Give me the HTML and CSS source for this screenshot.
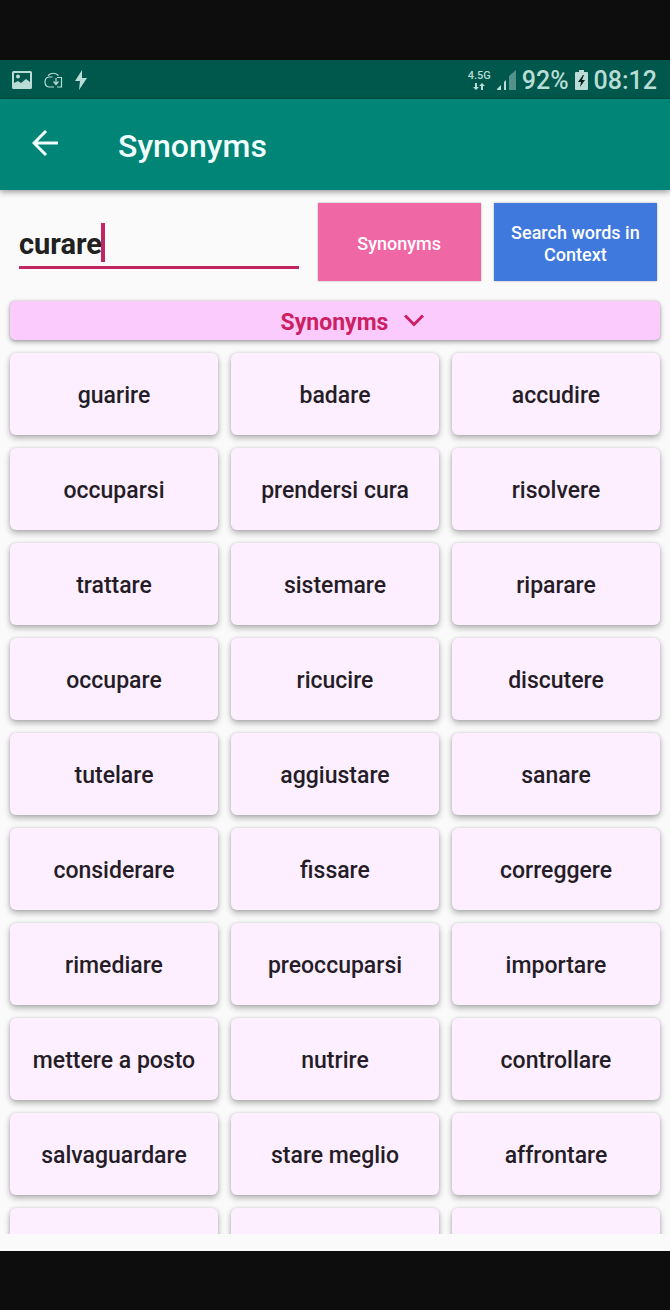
FILE: index.html
```html
<!DOCTYPE html>
<html lang="en">
<head>
<meta charset="utf-8">
<meta name="viewport" content="width=device-width, initial-scale=1">
<title>Synonyms</title>
<link rel="stylesheet" href="styles.css">
</head>
<body>
<div class="screen">
  <div class="status">
    <div class="status-left">
      <svg width="20" height="18" viewBox="0 0 20 18"><path fill="currentColor" fill-rule="evenodd" d="M1.500 0h17Q20 0 20 1.500v15q0 1.500-1.500 1.500h-17Q0 18 0 16.500v-15Q0 0 1.500 0zM2 2v10l4-2 3 2 5-4 4 3V2zM4 5.500a2 2 0 1 0 4 0a2 2 0 1 0-4 0z"/></svg>
      <svg width="19" height="18" viewBox="0 0 19 18" fill="none" stroke="currentColor" stroke-width="1.200"><path d="M4 4.500Q9 0 14.500 4.500M8.500 6H5Q1 6.500 1 11t4 5h5M13 6.500h4.500V16H13M12 7v6M9.500 10.500l2.500 3 2.500-3"/></svg>
      <svg width="12" height="20" viewBox="0 0 12 20"><path fill="currentColor" d="M7 0L0 11h5l-1 9 8-12H7z"/></svg>
    </div>
    <div class="status-right">
      <div class="network">
        <span>4.5G</span>
        <svg width="12" height="7" viewBox="0 0 12 7"><path fill="currentColor" d="M2 0h2v4h2L3 7 0 4h2zM8 7h2V3h2L9 0 6 3h2z"/></svg>
      </div>
      <svg class="signal" width="19" height="20" viewBox="0 0 19 20" fill="currentColor"><path d="M0 20v-1l4-4v5zM7 20v-8l2-2v10z"/><path opacity=".45" d="M12 20V6l7-6v20z"/></svg>
      <span class="clock">92%</span>
      <svg class="battery" width="13" height="20" viewBox="0 0 13 20"><path fill="currentColor" d="M4 0h5v2h3q1 0 1 1v16q0 1-1 1H1q-1 0-1-1V3q0-1 1-1h3z"/><path fill="#10241f" d="M8 5L3 12h3l-1 5 5-7H7l2-5z"/></svg>
      <span class="clock">08:12</span>
    </div>
  </div>
  <header class="appbar">
    <button class="back" type="button" aria-label="Back">
      <svg width="26" height="26" viewBox="0 0 26 26" fill="none" stroke="currentColor" stroke-width="3"><path d="M26 13H2M14 1L2 13l12 12"/></svg>
    </button>
    <h1 class="title">Synonyms</h1>
  </header>
  <main class="content">
    <form class="search">
      <div class="field">
        <input class="word" type="text" value="curare" aria-label="Word">
        <span class="caret"></span>
      </div>
      <button class="action pink" type="button">Synonyms</button>
      <button class="action blue" type="button">Search words in Context</button>
    </form>
    <button class="section" type="button">Synonyms
      <svg width="20" height="13" viewBox="0 0 20 13" fill="none" stroke="currentColor" stroke-width="3"><path d="M1 1.500l9 9 9-9"/></svg>
    </button>
    <div class="grid">
      <button class="card" type="button">guarire</button>
      <button class="card" type="button">badare</button>
      <button class="card" type="button">accudire</button>
      <button class="card" type="button">occuparsi</button>
      <button class="card" type="button">prendersi cura</button>
      <button class="card" type="button">risolvere</button>
      <button class="card" type="button">trattare</button>
      <button class="card" type="button">sistemare</button>
      <button class="card" type="button">riparare</button>
      <button class="card" type="button">occupare</button>
      <button class="card" type="button">ricucire</button>
      <button class="card" type="button">discutere</button>
      <button class="card" type="button">tutelare</button>
      <button class="card" type="button">aggiustare</button>
      <button class="card" type="button">sanare</button>
      <button class="card" type="button">considerare</button>
      <button class="card" type="button">fissare</button>
      <button class="card" type="button">correggere</button>
      <button class="card" type="button">rimediare</button>
      <button class="card" type="button">preoccuparsi</button>
      <button class="card" type="button">importare</button>
      <button class="card" type="button">mettere a posto</button>
      <button class="card" type="button">nutrire</button>
      <button class="card" type="button">controllare</button>
      <button class="card" type="button">salvaguardare</button>
      <button class="card" type="button">stare meglio</button>
      <button class="card" type="button">affrontare</button>
      <div class="card"></div>
      <div class="card"></div>
      <div class="card"></div>
    </div>
  </main>
</div>
</body>
</html>
```
FILE: styles.css
```css
* { box-sizing: border-box; }
body {
  margin: 0;
  background: #0d0d0d;
  font-family: Roboto, sans-serif;
}
button { border: 0; padding: 0; font-family: inherit; cursor: pointer; }
svg { display: block; flex: none; }
.screen {
  height: 100vh;
  padding: 60px 0 59px;
  display: flex;
  flex-direction: column;
}
.status {
  flex: none;
  height: 39px;
  padding: 0 13px 0 12px;
  display: flex;
  justify-content: space-between;
  align-items: center;
  background: #00574b;
  color: #b9dcd6;
}
.status-left { display: flex; align-items: center; gap: 12px; }
.status-right { display: flex; align-items: center; gap: 6px; }
.network {
  display: flex;
  flex-direction: column;
  align-items: center;
  gap: 2px;
  font-size: 11px;
  line-height: 11px;
  font-weight: 500;
}
.clock { font-size: 25px; line-height: 39px; padding-top: 2px; font-weight: 500; }
.appbar {
  flex: none;
  position: relative;
  height: 91px;
  padding: 0 32px;
  display: flex;
  align-items: center;
  gap: 60px;
  background: #008577;
  color: #f2ffff;
  box-shadow: 0 2px 6px rgba(0, 0, 0, .4);
}
.back { background: none; color: inherit; padding-bottom: 4px; }
.title { margin: 0; padding-top: 2px; font-size: 32px; line-height: 40px; font-weight: 500; }
.content {
  flex: 1;
  min-height: 0;
  display: flex;
  flex-direction: column;
  padding-bottom: 17px;
  background: #fafafa;
}
.search {
  flex: none;
  display: grid;
  grid-template-columns: 7fr 4fr 4fr;
  gap: 13px;
  padding: 13px 13px 20px 19px;
}
.field { position: relative; padding: 20px 6px 0 0; }
.word {
  display: block;
  width: 100%;
  height: 46px;
  border: 0;
  border-bottom: 3px solid #c2255f;
  padding: 0 0 2px;
  background: none;
  color: #202020;
  font-family: inherit;
  font-size: 29px;
  font-weight: 700;
  outline: none;
}
.caret {
  position: absolute;
  left: 82px;
  top: 20px;
  width: 4px;
  height: 39px;
  background: #c2255f;
}
.action {
  height: 78px;
  padding: 3px 12px 0;
  color: #fff;
  font-size: 18px;
  line-height: 22px;
  font-weight: 500;
  box-shadow: 0 0 2px rgba(0, 0, 0, .3);
}
.pink { background: #f067a6; }
.blue { background: #3f79dd; }
.section {
  flex: none;
  height: 39px;
  margin: 0 10px;
  padding: 5px 0 0 35px;
  display: flex;
  justify-content: center;
  align-items: center;
  gap: 16px;
  border-radius: 5px;
  background: #fccbfd;
  color: #cb2063;
  font-size: 23px;
  line-height: 28px;
  font-weight: 700;
  box-shadow: 0 2px 5px rgba(0, 0, 0, .35), 0 0 2px rgba(0, 0, 0, .2);
}
.section svg { margin-bottom: 6px; }
.grid {
  flex: 1;
  min-height: 0;
  overflow: hidden;
  display: grid;
  grid-template-columns: repeat(3, 1fr);
  grid-auto-rows: 82px;
  gap: 13px;
  padding: 13px 10px 0;
}
.card {
  border-radius: 6px;
  padding-top: 4px;
  background: #fdefff;
  color: #241c26;
  font-size: 23px;
  line-height: 28px;
  font-weight: 500;
  box-shadow: 0 3px 6px rgba(0, 0, 0, .3), 0 0 3px rgba(0, 0, 0, .12);
}
```
